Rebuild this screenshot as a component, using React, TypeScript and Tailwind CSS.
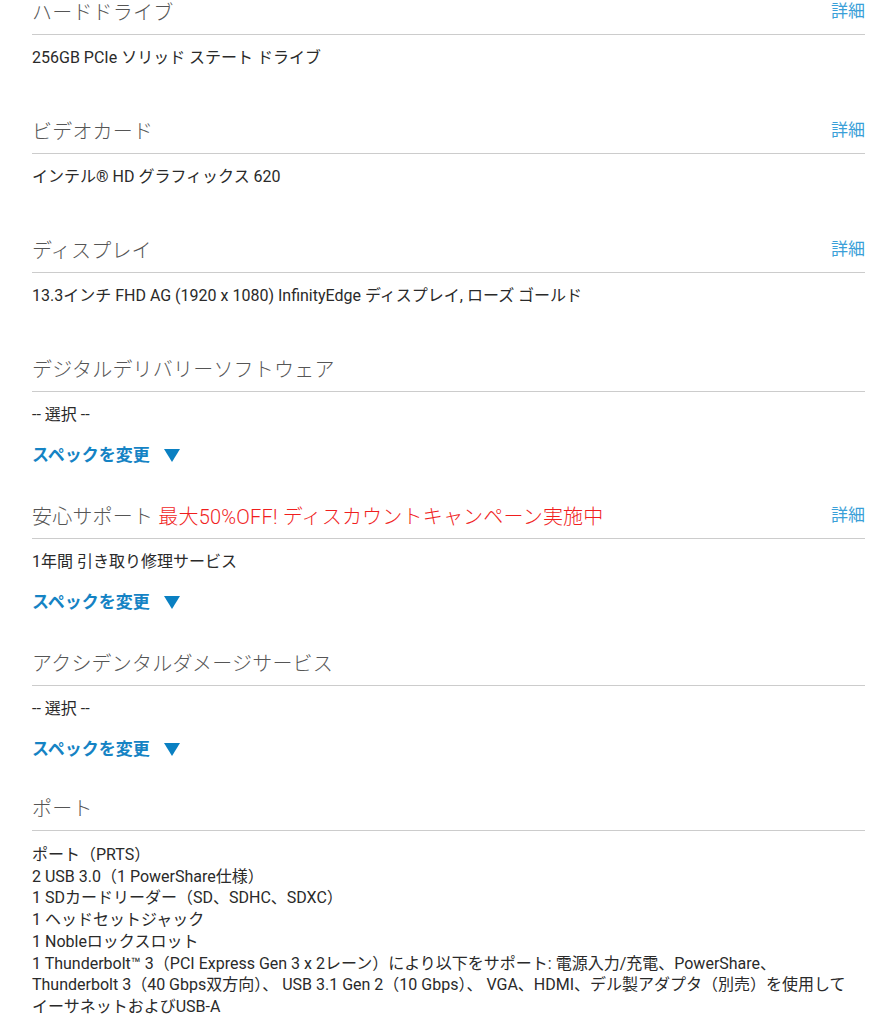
import React from "react";

const FONT = { fontFamily: "Roboto, 'Noto Sans CJK JP', 'Noto Sans', sans-serif" };

function Heading({ children, detail = true }: { children: React.ReactNode; detail?: boolean }) {
  return (
    <div className="flex items-start justify-between border-b border-[#cccccc] pt-[2px] pb-[7px]">
      <div className="text-[20px] leading-[28px] text-[#555555] font-light tracking-[0.2px]">{children}</div>
      {detail && <div className="text-[17px] leading-[24px] text-[#3a9fd8]">詳細</div>}
    </div>
  );
}

function ChangeLink() {
  return (
    <div className="mt-[18px] flex items-center text-[17px] leading-[22px] font-bold text-[#1583c4]">
      <span>スペックを変更</span>
      <svg width="16" height="13" viewBox="0 0 16 13" className="ml-[14px]">
        <polygon points="0,0 16,0 8,13" fill="#0a80c2" />
      </svg>
    </div>
  );
}

function Simple({ title, body }: { title: string; body: string }) {
  return (
    <section className="mb-[47px]">
      <Heading>{title}</Heading>
      <div className="mt-[12px] text-[16px] leading-[22px] text-[#2a2a2a]">{body}</div>
    </section>
  );
}

export default function App() {
  return (
    <div className="bg-white min-h-[1024px] overflow-hidden" style={FONT}>
      <div className="ml-8 mr-1 -mt-[3px]">
        <Simple title="ハードドライブ" body="256GB PCIe ソリッド ステート ドライブ" />
        <Simple title="ビデオカード" body="インテル® HD グラフィックス 620" />
        <Simple title="ディスプレイ" body="13.3インチ FHD AG (1920 x 1080) InfinityEdge ディスプレイ, ローズ ゴールド" />

        <section className="mb-[35px]">
          <Heading detail={false}>デジタルデリバリーソフトウェア</Heading>
          <div className="mt-[12px] text-[16px] leading-[22px] text-[#2a2a2a]">-- 選択 --</div>
          <ChangeLink />
        </section>

        <section className="mb-[35px]">
          <Heading>
            安心サポート <span className="text-[#f01e1e]">最大50%OFF! ディスカウントキャンペーン実施中</span>
          </Heading>
          <div className="mt-[12px] text-[16px] leading-[22px] text-[#2a2a2a]">1年間 引き取り修理サービス</div>
          <ChangeLink />
        </section>

        <section className="mb-[33px]">
          <Heading detail={false}>アクシデンタルダメージサービス</Heading>
          <div className="mt-[12px] text-[16px] leading-[22px] text-[#2a2a2a]">-- 選択 --</div>
          <ChangeLink />
        </section>

        <section>
          <Heading detail={false}>ポート</Heading>
          <div className="mt-[13px] text-[16px] leading-[21.7px] text-[#2a2a2a]">
            <div>ポート（PRTS）</div>
            <div>2 USB 3.0（1 PowerShare仕様）</div>
            <div>1 SDカードリーダー（SD、SDHC、SDXC）</div>
            <div>1 ヘッドセットジャック</div>
            <div>1 Nobleロックスロット</div>
            <div>
              1 Thunderbolt™ 3（PCI Express Gen 3 x 2レーン）により以下をサポート: 電源入力/充電、PowerShare、
              <br />
              Thunderbolt 3（40 Gbps双方向）、 USB 3.1 Gen 2（10 Gbps）、 VGA、HDMI、デル製アダプタ（別売）を使用して
              <br />
              イーサネットおよびUSB-A
            </div>
          </div>
        </section>
      </div>
    </div>
  );
}
